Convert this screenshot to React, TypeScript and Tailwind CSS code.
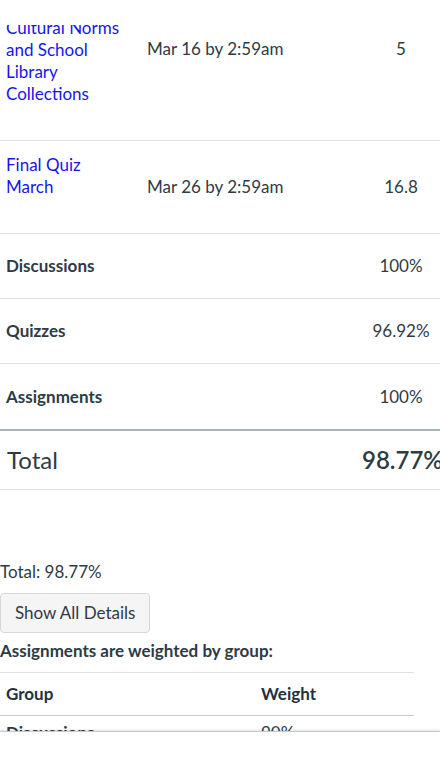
const assignments = [
  {
    title: ["Cultural Norms", "and School", "Library", "Collections"],
    due: "Mar 16 by 2:59am",
    score: "5",
  },
  {
    title: ["Final Quiz", "March"],
    due: "Mar 26 by 2:59am",
    score: "16.8",
  },
];

const groups = [
  { name: "Discussions", pct: "100%" },
  { name: "Quizzes", pct: "96.92%" },
  { name: "Assignments", pct: "100%" },
];

export default function App() {
  const [first, second] = assignments;

  return (
    <div className="flex h-[783px] w-[440px] flex-col overflow-hidden bg-white font-['Lato',_'Liberation_Sans',_sans-serif] text-[17px] leading-[22px] text-[#2d3b45]">
      <div className="relative z-10 h-[25px] shrink-0 bg-white" />

      <div className="min-h-0 flex-1 overflow-hidden">
        <div className="-mt-[8px]">
          {/* first row is partly scrolled out of view */}
          <div className="flex items-start border-b border-[#dfe2e5] pb-[35px] pl-[6px]">
            <div className="w-[122px] text-[#1616ec]">
              {first.title.map((t) => (
                <div key={t}>{t}</div>
              ))}
            </div>
            <div className="ml-[19px] mt-[21px] flex-1">{first.due}</div>
            <div className="mt-[21px] w-[78px] text-center">{first.score}</div>
          </div>

          <div className="flex items-center border-b border-[#dfe2e5] py-[13px] pl-[6px]">
            <div className="w-[122px] pb-[22px] text-[#1616ec]">
              {second.title.map((t) => (
                <div key={t}>{t}</div>
              ))}
            </div>
            <div className="ml-[19px] flex-1">{second.due}</div>
            <div className="w-[78px] text-center">{second.score}</div>
          </div>

          {groups.map((g, i) => (
            <div
              key={g.name}
              className={`flex h-[65px] items-center pl-[6px] ${
                i < groups.length - 1 ? "border-b border-[#dfe2e5]" : ""
              }`}
            >
              <div className="flex-1 font-bold">{g.name}</div>
              <div className="w-[78px] text-center">{g.pct}</div>
            </div>
          ))}

          <div className="flex h-[61px] items-center border-b border-t-2 border-b-[#dfe2e5] border-t-[#a9b3ba] pl-[7px] text-[24px] leading-[30px]">
            <div className="flex-1">Total</div>
            <div className="w-[78px] whitespace-nowrap font-semibold">98.77%</div>
          </div>

          <div className="mt-[71px]">Total: 98.77%</div>
          <button
            type="button"
            className="mt-[10px] rounded-[4px] border border-[#d4d8db] bg-[#f5f5f5] px-[14px] py-[8px] text-[#2d3b45]"
          >
            Show All Details
          </button>
          <div className="mt-[7px] font-bold">Assignments are weighted by group:</div>

          <div className="mt-[10px] w-[414px] border-t border-[#dfe2e5]">
            <div className="flex h-[43px] items-center border-b border-[#c7cdd1] pl-[6px] font-bold text-[#22303b]">
              <div className="w-[255px]">Group</div>
              <div>Weight</div>
            </div>
            <div className="flex items-center pl-[6px] pt-[6px] font-bold">
              <div className="w-[255px]">Discussions</div>
              <div className="font-normal">90%</div>
            </div>
          </div>
        </div>
      </div>

      <div className="relative z-10 h-[52px] shrink-0 border-t border-[#c9c9c9] bg-white shadow-[0_-1px_2px_rgba(0,0,0,0.12)]" />
    </div>
  );
}
